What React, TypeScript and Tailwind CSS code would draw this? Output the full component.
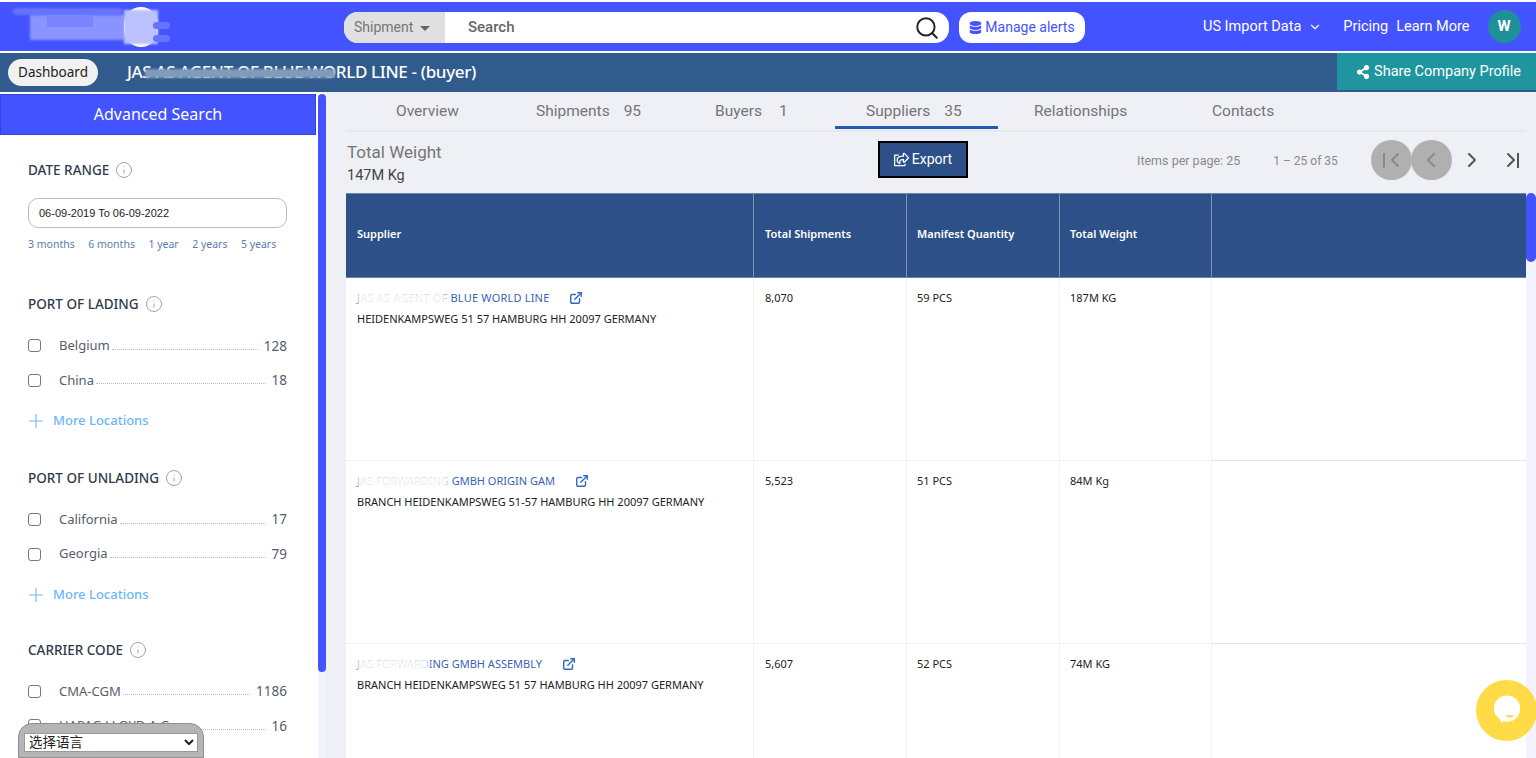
import React from 'react';
import { ChevronDown, Search, Plus, Info, ChevronLeft, ChevronRight } from 'lucide-react';
import { FaDatabase, FaShareAlt, FaRegShareSquare } from 'react-icons/fa';
import { FiExternalLink } from 'react-icons/fi';

const facets = [
  {
    title: 'PORT OF LADING',
    top: 'mt-[41px]',
    items: [
      { name: 'Belgium', count: '128' },
      { name: 'China', count: '18' },
    ],
    more: true,
  },
  {
    title: 'PORT OF UNLADING',
    top: 'mt-[36px]',
    items: [
      { name: 'California', count: '17' },
      { name: 'Georgia', count: '79' },
    ],
    more: true,
  },
  {
    title: 'CARRIER CODE',
    top: 'mt-[34px]',
    items: [
      { name: 'CMA-CGM', count: '1186' },
      { name: 'HAPAG LLOYD A G', count: '16' },
    ],
    more: false,
  },
];

const tabs = [
  { label: 'Overview', count: '', w: 'w-[190px]', pl: 'pl-[50px]', gap: 'ml-[14px]' },
  { label: 'Shipments', count: '95', w: 'w-[179px]', pl: 'pl-0', gap: 'ml-[14px]' },
  { label: 'Buyers', count: '1', w: 'w-[120px]', pl: 'pl-0', gap: 'ml-[17px]' },
];

const rows = [
  { name: 'JAS AS AGENT OF BLUE WORLD LINE', track: 'tracking-[0.2px]', blur: 'w-[90px]', address: 'HEIDENKAMPSWEG 51 57 HAMBURG HH 20097 GERMANY', ships: '8,070', qty: '59 PCS', weight: '187M KG' },
  { name: 'JAS FORWARDING GMBH ORIGIN GAM', track: '', blur: 'w-[92px]', address: 'BRANCH HEIDENKAMPSWEG 51-57 HAMBURG HH 20097 GERMANY', ships: '5,523', qty: '51 PCS', weight: '84M Kg' },
  { name: 'JAS FORWARDING GMBH ASSEMBLY', track: '', blur: 'w-[72px]', address: 'BRANCH HEIDENKAMPSWEG 51 57 HAMBURG HH 20097 GERMANY', ships: '5,607', qty: '52 PCS', weight: '74M KG' },
];

const cols = 'grid grid-cols-[408px_153px_153px_152px_1fr]';

export default function App() {
  return (
    <div className="relative h-[758px] w-[1536px] overflow-hidden bg-white font-['Roboto',sans-serif]">
      {/* top nav */}
      <header className="mt-[2px] flex h-[49px] items-center bg-[#4353ff] text-white">
        <div className="relative h-full w-[344px] shrink-0">
          <div className="absolute left-[13px] top-[6px] h-[7px] w-[110px] rounded-full bg-[#6573ff] blur-[1px]" />
          <div className="absolute left-[30px] top-[13px] h-[25px] w-[95px] bg-[#8a94ff] blur-[1px]" />
          <div className="absolute left-[47px] top-[13px] h-[12px] w-[46px] bg-[#7a84ff]" />
          <div className="absolute left-[124px] top-[5px] h-[40px] w-[34px] rounded-[17px] bg-white" />
          <div className="absolute left-[124px] top-[8px] h-[34px] w-[34px] bg-[#bcc2ff] blur-[1px]" />
          <div className="absolute left-[153px] top-[20px] h-[7px] w-[17px] rounded-sm bg-[#6573ff]" />
          <div className="absolute left-[153px] top-[33px] h-[7px] w-[17px] rounded-sm bg-[#6573ff]" />
        </div>
        <div className="mt-[1px] flex h-[31px] w-[605px] shrink-0 overflow-hidden rounded-[14px] bg-white">
          <div className="flex w-[101px] items-center gap-[7px] bg-[#e0e0e0] pl-[10px] text-[14px] text-[#757575]">
            Shipment
            <span className="mt-[2px] h-0 w-0 border-x-[5px] border-t-[5px] border-x-transparent border-t-[#666]" />
          </div>
          <div className="flex flex-1 items-center justify-between pl-[23px] pr-[9px]">
            <span className="text-[15px] font-medium text-[#666]">Search</span>
            <Search size={26} strokeWidth={1.8} className="mt-[1px] text-[#222]" />
          </div>
        </div>
        <div className="ml-[10px] mt-[1px] flex h-[31px] w-[126px] shrink-0 items-center justify-center gap-[3px] rounded-[12px] bg-white text-[14px] text-[#4353ff]">
          <FaDatabase size={13} />
          Manage alerts
        </div>
        <div className="ml-[118px] flex items-center gap-[7px] text-[14.5px]">
          US Import Data
          <ChevronDown size={14} />
        </div>
        <span className="ml-[21px] text-[14.5px]">Pricing</span>
        <span className="ml-[8px] text-[14.5px]">Learn More</span>
        <div className="ml-[18px] flex h-[33px] w-[33px] items-center justify-center rounded-full bg-[#1f8f9a] text-[15px] font-bold">W</div>
      </header>

      {/* company bar */}
      <div className="mt-[2px] flex h-[39px] items-center bg-[#305b8c]">
        <div className="ml-[8px] flex h-[27px] w-[90px] items-center justify-center rounded-[14px] bg-[#f1f1f1] font-['Noto_Sans',sans-serif] text-[13.5px] text-[#222]">Dashboard</div>
        <div className="relative mb-[2px] ml-[29px] font-['Noto_Sans',sans-serif] text-[17px] font-medium tracking-[-0.35px] text-white">
          JAS AS AGENT OF BLUE WORLD LINE - (buyer)
          <div className="absolute left-[18px] top-[10px] h-[9px] w-[190px] bg-[#7f9cbb] blur-[1px]" />
        </div>
        <div className="ml-auto mb-[2px] flex h-[37px] w-[199px] items-center justify-center gap-[4px] bg-[#1f969f] pl-[4px] text-[14.5px] text-white">
          <FaShareAlt size={14} />
          Share Company Profile
        </div>
      </div>

      <div className="flex h-[666px]">
        {/* sidebar */}
        <aside className="h-full w-[318px] shrink-0 overflow-hidden bg-white font-['Noto_Sans',sans-serif]">
          <div className="mr-[2px] mt-[2px] flex h-[41px] items-center justify-center border border-[#3344dd] bg-[#4353ff] pb-[2px] text-[16px] text-white">Advanced Search</div>
          <div className="pl-[28px] pr-[31px]">
            <div className="mt-[25px] flex items-center gap-[6px] text-[13.5px] font-medium text-[#2f3b4c]">
              DATE RANGE
              <Info size={18} strokeWidth={1.2} className="text-[#999]" />
            </div>
            <div className="mt-[18px] flex h-[30px] items-center rounded-[10px] border border-[#bbb] pl-[10px] font-['Liberation_Sans',sans-serif] text-[11px] text-[#222]">06-09-2019 To 06-09-2022</div>
            <div className="mt-[9px] flex gap-[13.5px] text-[10.5px] text-[#5b7cad]">
              <span>3 months</span>
              <span>6 months</span>
              <span>1 year</span>
              <span>2 years</span>
              <span>5 years</span>
            </div>
            {facets.map((f) => (
              <div key={f.title} className={f.top}>
                <div className="flex items-center gap-[6px] text-[13.5px] font-medium text-[#2f3b4c]">
                  {f.title}
                  <Info size={18} strokeWidth={1.2} className="text-[#999]" />
                </div>
                <div className="mt-[21px] flex flex-col gap-[13.5px]">
                  {f.items.map((it) => (
                    <div key={it.name} className="flex h-[21px] items-center text-[13px] text-[#555e6b]">
                      <span className="h-[13px] w-[13px] shrink-0 rounded-[3px] border border-[#777]" />
                      <span className="ml-[18px]">{it.name}</span>
                      <span className="mx-[2px] mt-[7px] flex-1 border-b border-dotted border-[#bbb]" />
                      <span className="ml-[4px] text-[13.5px]">{it.count}</span>
                    </div>
                  ))}
                </div>
                {f.more && (
                  <div className="mt-[19px] flex items-center gap-[6px] text-[13px] font-medium text-[#6bb6fb]">
                    <Plus size={22} strokeWidth={1.2} className="-ml-[3px]" />
                    More Locations
                  </div>
                )}
              </div>
            ))}
          </div>
        </aside>

        {/* sidebar scrollbar */}
        <div className="mt-[2px] h-[664px] w-[8px] shrink-0 bg-[#f3f3ff]">
          <div className="h-[578px] rounded-full bg-[#4353ff]" />
        </div>

        {/* main */}
        <main className="h-full flex-1 bg-[#eef0f5]">
          <nav className="ml-[20px] mr-[10px] flex h-[40px] items-start border-b-2 border-[#e6e8ec] text-[15.5px] text-[#757575]">
            {tabs.map((t) => (
              <div key={t.label} className={`${t.w} ${t.pl} pt-[8px]`}>
                {t.label}
                {t.count && <span className={t.gap}>{t.count}</span>}
              </div>
            ))}
            <div className="h-[37px] w-[163px] border-b-[3px] border-[#235bb5] pl-[31px] pt-[8px]">
              Suppliers<span className="ml-[14px]">35</span>
            </div>
            <div className="w-[214px] pl-[36px] pt-[8px]">Relationships</div>
            <div className="pt-[8px]">Contacts</div>
          </nav>

          <div className="ml-[20px] flex h-[61px] items-start">
            <div className="w-[532px] pt-[9px] pl-[1px]">
              <div className="text-[17px] leading-[22px] text-[#757575]">Total Weight</div>
              <div className="mt-[3px] text-[14.5px] leading-[20px] text-[#444]">147M Kg</div>
            </div>
            <div className="mt-[9px] flex h-[37px] w-[90px] items-center justify-center gap-[3px] border-2 border-black bg-[#2d5088] text-[14px] text-white">
              <FaRegShareSquare size={15} />
              Export
            </div>
            <div className="ml-[169px] mt-[20px] text-[12.5px] text-[#8a8a8a]">Items per page: 25</div>
            <div className="ml-[33px] mt-[20px] text-[12px] text-[#8a8a8a]">1 – 25 of 35</div>
            <div className="ml-[33px] mt-[8px] flex items-center">
              <div className="flex h-[40px] w-[41px] items-center justify-center rounded-full bg-[#b0b0b0] pl-[7px] text-[#8a8a8a]">
                <span className="h-[15px] w-[2px] bg-[#8a8a8a]" />
                <ChevronLeft size={24} className="-ml-[2px]" />
              </div>
              <div className="-ml-[1px] flex h-[40px] w-[41px] items-center justify-center rounded-full bg-[#b0b0b0] text-[#8a8a8a]">
                <ChevronLeft size={24} />
              </div>
              <div className="flex h-[40px] w-[41px] items-center justify-center text-[#555]">
                <ChevronRight size={24} />
              </div>
              <div className="flex h-[40px] w-[40px] items-center justify-center pr-[8px] text-[#555]">
                <ChevronRight size={24} />
                <span className="-ml-[6px] h-[15px] w-[2px] bg-[#555]" />
              </div>
            </div>
          </div>

          {/* table */}
          <div className="flex h-[565px]">
            <div className="ml-[20px] w-[1180px] overflow-hidden bg-white font-['Noto_Sans',sans-serif] text-[11px] text-[#222]">
              <div className={`${cols} h-[85px] border-y border-[#6f84a6] bg-[#2d5088] pb-0 font-semibold text-white`}>
                <div className="flex items-center border-r border-[#7f93b3] pb-[2px] pl-[11px]">Supplier</div>
                <div className="flex items-center border-r border-[#7f93b3] pb-[2px] pl-[11px]">Total Shipments</div>
                <div className="flex items-center border-r border-[#7f93b3] pb-[2px] pl-[10px]">Manifest Quantity</div>
                <div className="flex items-center border-r border-[#7f93b3] pb-[2px] pl-[10px]">Total Weight</div>
                <div />
              </div>
              {rows.map((r) => (
                <div key={r.ships} className={`${cols} h-[183px]`}>
                  <div className="border-r border-b border-[#f2f2f2] pl-[11px] pt-[12px]">
                    <div className="flex items-center text-[#3a62b8]">
                      <span className={`relative ${r.track}`}>
                        {r.name}
                        <span className={`absolute left-0 top-[2px] h-[13px] ${r.blur} bg-white/90 blur-[2px]`} />
                      </span>
                      <FiExternalLink size={14} strokeWidth={2.4} className="ml-[20px] text-[#2c6bc0]" />
                    </div>
                    <div className="mt-[4px]">{r.address}</div>
                  </div>
                  <div className="border-r border-b border-[#f2f2f2] pl-[11px] pt-[12px]">{r.ships}</div>
                  <div className="border-r border-b border-[#f2f2f2] pl-[10px] pt-[12px]">{r.qty}</div>
                  <div className="border-r border-b border-[#f2f2f2] pl-[10px] pt-[12px]">{r.weight}</div>
                  <div className="border-b border-[#e4e4e4]" />
                </div>
              ))}
            </div>
            <div className="w-[10px] bg-[#f3f3ff]">
              <div className="h-[69px] rounded-full bg-[#4353ff]" />
            </div>
          </div>
        </main>
      </div>

      {/* language picker */}
      <div className="absolute bottom-0 left-[18px] h-[35px] w-[186px] rounded-t-[14px] border border-[#8f8f8f] bg-[#b5b5b5] px-[5px] pt-[9px]">
        <select className="block h-[19px] w-full border border-[#999] bg-white py-0 font-['Liberation_Sans','Noto_Sans_CJK_SC',sans-serif] text-[13.5px] leading-none text-[#222]">
          <option>选择语言</option>
        </select>
      </div>

      {/* chat bubble */}
      <div className="absolute left-[1476px] top-[680px] flex h-[61px] w-[61px] items-center justify-center rounded-full bg-[#ffdb47]">
        <svg width="28" height="31" viewBox="0 0 30 32">
          <path d="M15 1C7 1 1 7 1 15c0 4.500 2 8 5.500 10.500L10 31l1-2.500c1.500.3 2.500.5 4 .5 8 0 14-6 14-14S23 1 15 1z" fill="#fff" transform="translate(0 -1)" />
          <path d="M13 21h10c-1 3.500-8.500 3.500-10 0z" fill="#ffdb47" />
        </svg>
      </div>
    </div>
  );
}
